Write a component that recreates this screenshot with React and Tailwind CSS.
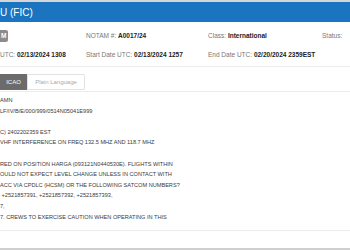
export default function App() {
  const lines = [
    "AMN",
    "LF/IV/B/E/000/999/0514N05041E999",
    "",
    "C) 2402202359 EST",
    "VHF INTERFERENCE ON FREQ 132.5 MHZ AND 118.7 MHZ",
    "",
    "RED ON POSITION HARGA (093121N0440530E). FLIGHTS WITHIN",
    "OULD NOT EXPECT LEVEL CHANGE UNLESS IN CONTACT WITH",
    "ACC VIA CPDLC (HCSM) OR THE FOLLOWING SATCOM NUMBERS?",
    " +2521857391, +2521857392, +2521857393,",
    "7,",
    "7. CREWS TO EXERCISE CAUTION WHEN OPERATING IN THIS",
  ];
  return (
    <div className="w-[350px] h-[250px] overflow-hidden bg-white flex flex-col" style={{ fontFamily: '"Liberation Sans", Arial, sans-serif' }}>
      <div className="h-[2px] bg-[#d6d6d6]" />
      <div className="h-[20px] bg-[#1a74c0] text-white text-[10px] flex items-center whitespace-nowrap">U (FIC)</div>
      <div className="grid grid-cols-[86px_122px_114px_1fr] text-[6.5px] text-[#777] whitespace-nowrap border-b border-[#ececec] pt-[8px] pb-[5px]">
        <div className="h-[12px] flex items-center">
          <span className="bg-[#8c8c8c] text-white font-bold pl-[1px] pr-[2px] h-[12px] flex items-center rounded-r-[2px]">M</span>
        </div>
        <div className="h-[12px] flex items-center">NOTAM #:&nbsp;<b className="text-[#222]">A0017/24</b></div>
        <div className="h-[12px] flex items-center">Class:&nbsp;<b className="text-[#222]">International</b></div>
        <div className="h-[12px] flex items-center">Status:</div>
        <div className="h-[12px] mt-[7px] flex items-center">UTC:&nbsp;<b className="text-[#222]">02/13/2024 1308</b></div>
        <div className="h-[12px] mt-[7px] flex items-center">Start Date UTC:&nbsp;<b className="text-[#222]">02/13/2024 1257</b></div>
        <div className="h-[12px] mt-[7px] flex items-center">End Date UTC:&nbsp;<b className="text-[#222]">02/20/2024 2359EST</b></div>
        <div />
      </div>
      <div className="pt-[7px] border-b border-[#ececec] pb-[1px]">
        <div className="flex text-[6px] h-[16px]">
          <div className="w-[27px] bg-[#6b6b6b] text-white flex items-center justify-center">ICAO</div>
          <div className="w-[58px] border border-[#e2e2e2] text-[#aaa] flex items-center justify-center rounded-r-[2px]">Plain Language</div>
        </div>
      </div>
      <div className="pt-[3px] text-[5.6px] leading-[10.6px] text-[#3a3a3a] whitespace-pre h-[139px] border-b border-[#ececec]">
        {lines.map((l, i) => (
          <div key={i} className="h-[10.6px]">{l}</div>
        ))}
      </div>
      <div className="flex-1" />
      <div className="h-[2px] bg-[#cfcfcf]" />
    </div>
  );
}
